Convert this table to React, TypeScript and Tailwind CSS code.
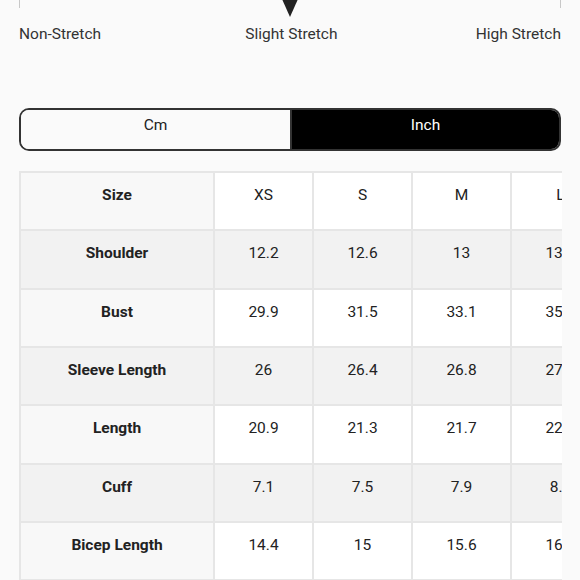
import React from "react";

const sizes = ["XS", "S", "M", "L"];

const rows: { label: string; values: string[] }[] = [
  { label: "Shoulder", values: ["12.2", "12.6", "13", "13.4"] },
  { label: "Bust", values: ["29.9", "31.5", "33.1", "35.4"] },
  { label: "Sleeve Length", values: ["26", "26.4", "26.8", "27.2"] },
  { label: "Length", values: ["20.9", "21.3", "21.7", "22.2"] },
  { label: "Cuff", values: ["7.1", "7.5", "7.9", "8.3"] },
  { label: "Bicep Length", values: ["14.4", "15", "15.6", "16.4"] },
];

export default function App() {
  return (
    <div className="w-[580px] h-[580px] overflow-hidden bg-[#fafafa] text-[#222] font-['Roboto',sans-serif]">
      {/* Stretch scale */}
      <div className="px-[19px]">
        <div className="flex items-start justify-between h-[22px]">
          <div className="w-px h-[8px] bg-[#c8c8c8]" />
          <svg width="22" height="19" viewBox="0 0 22 19" className="-mt-px">
            <polygon points="3,0 19,0 11,18" fill="#222" />
          </svg>
          <div className="w-px h-[8px] bg-[#c8c8c8]" />
        </div>
        <div className="flex justify-between text-[15.5px] leading-[24px] text-[#333]">
          <span>Non-Stretch</span>
          <span className="pl-[6px]">Slight Stretch</span>
          <span>High Stretch</span>
        </div>
      </div>

      {/* Unit toggle */}
      <div className="px-[19px] pt-[62px]">
        <div className="flex h-[43px] rounded-[10px] border-2 border-[#333] overflow-hidden text-[15.5px]">
          <div className="w-[269px] bg-[#fafafa] flex justify-center pt-[4px]">Cm</div>
          <div className="flex-1 bg-black text-white flex justify-center pt-[4px] border-l-2 border-[#333]">Inch</div>
        </div>
      </div>

      {/* Size table */}
      <div className="pl-[19px] pt-[20px] w-[562px] overflow-hidden">
        <div className="w-max border-l-2 border-t-2 border-[#e6e6e6] text-[15.5px]">
          <div className="flex">
            <div className="w-[194px] h-[58.33px] bg-[#f8f8f8] border-r-2 border-b-2 border-[#e6e6e6] flex justify-center pt-[11px] font-bold">
              Size
            </div>
            {sizes.map((s) => (
              <div key={s} className="w-[99px] h-[58.33px] bg-white border-r-2 border-b-2 border-[#e6e6e6] flex justify-center pt-[11px]">
                {s}
              </div>
            ))}
          </div>
          {rows.map((r, i) => (
            <div key={r.label} className={i % 2 === 0 ? "flex bg-[#f2f2f2]" : "flex bg-white"}>
              <div
                className={
                  i % 2 === 0
                    ? "w-[194px] h-[58.33px] border-r-2 border-b-2 border-[#e6e6e6] flex justify-center pt-[11px] font-bold"
                    : "w-[194px] h-[58.33px] bg-[#f8f8f8] border-r-2 border-b-2 border-[#e6e6e6] flex justify-center pt-[11px] font-bold"
                }
              >
                {r.label}
              </div>
              {r.values.map((v, j) => (
                <div key={j} className="w-[99px] h-[58.33px] border-r-2 border-b-2 border-[#e6e6e6] flex justify-center pt-[11px]">
                  {v}
                </div>
              ))}
            </div>
          ))}
        </div>
      </div>
    </div>
  );
}
